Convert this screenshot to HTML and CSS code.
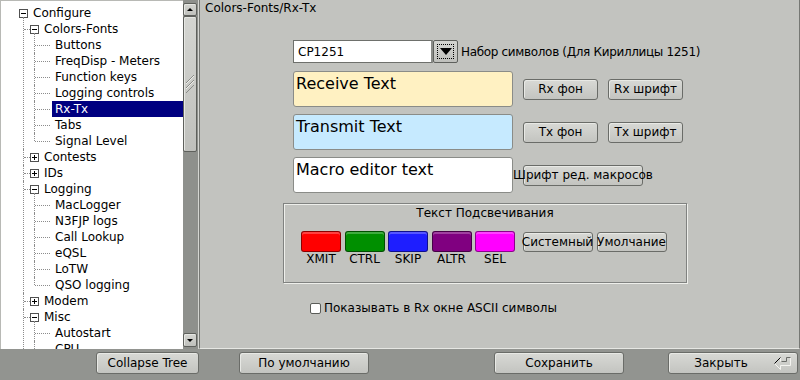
FILE: index.html
```html
<!DOCTYPE html>
<html lang="ru">
<head>
    <meta charset="UTF-8">
    <title>Configure - Colors-Fonts/Rx-Tx</title>
    <link rel="stylesheet" href="styles.css">
</head>
<body>
    <div class="main">
        <div class="browser">
            <div class="tree">
                <ul>
                    <li class="node"><div class="item"><span class="tog"></span><span class="label">Configure</span></div>
                        <ul>
                            <li class="node"><div class="item"><span class="tog"></span><span class="label">Colors-Fonts</span></div>
                                <ul>
                                    <li class="leaf"><div class="item"><span class="label">Buttons</span></div></li>
                                    <li class="leaf"><div class="item"><span class="label">FreqDisp - Meters</span></div></li>
                                    <li class="leaf"><div class="item"><span class="label">Function keys</span></div></li>
                                    <li class="leaf"><div class="item"><span class="label">Logging controls</span></div></li>
                                    <li class="leaf"><div class="item sel"><span class="label">Rx-Tx</span></div></li>
                                    <li class="leaf"><div class="item"><span class="label">Tabs</span></div></li>
                                    <li class="leaf"><div class="item"><span class="label">Signal Level</span></div></li>
                                </ul>
                            </li>
                            <li class="node"><div class="item"><span class="tog plus"></span><span class="label">Contests</span></div></li>
                            <li class="node"><div class="item"><span class="tog plus"></span><span class="label">IDs</span></div></li>
                            <li class="node"><div class="item"><span class="tog"></span><span class="label">Logging</span></div>
                                <ul>
                                    <li class="leaf"><div class="item"><span class="label">MacLogger</span></div></li>
                                    <li class="leaf"><div class="item"><span class="label">N3FJP logs</span></div></li>
                                    <li class="leaf"><div class="item"><span class="label">Call Lookup</span></div></li>
                                    <li class="leaf"><div class="item"><span class="label">eQSL</span></div></li>
                                    <li class="leaf"><div class="item"><span class="label">LoTW</span></div></li>
                                    <li class="leaf"><div class="item"><span class="label">QSO logging</span></div></li>
                                </ul>
                            </li>
                            <li class="node"><div class="item"><span class="tog plus"></span><span class="label">Modem</span></div></li>
                            <!-- list goes on below the fold, so the lines keep running -->
                            <li class="node more"><div class="item"><span class="tog"></span><span class="label">Misc</span></div>
                                <ul>
                                    <li class="leaf"><div class="item"><span class="label">Autostart</span></div></li>
                                    <li class="leaf more"><div class="item"><span class="label">CPU</span></div></li>
                                </ul>
                            </li>
                        </ul>
                    </li>
                </ul>
            </div>
            <div class="scroll">
                <div class="sb-btn up"></div>
                <div class="thumb">
                    <svg width="10" height="20" viewBox="0 0 10 20">
                        <path d="M1 9 L9 1 M1 14 L9 6 M1 19 L9 11" stroke="#8a8c88" stroke-width="1"/>
                        <path d="M1 10 L9 2 M1 15 L9 7" stroke="#eeeeea" stroke-width="1"/>
                    </svg>
                </div>
                <div class="track"></div>
                <div class="sb-btn down"></div>
            </div>
        </div>

        <section class="panel">
            <div class="panel-title">Colors-Fonts/Rx-Tx</div>
            <div class="content">
                <div class="combo-row">
                    <div class="combo">CP1251</div>
                    <div class="combo-btn"><span class="focus"><span class="tri"></span></span></div>
                    <span class="combo-label">Набор символов (Для Кириллицы 1251)</span>
                </div>

                <div class="text-row">
                    <div class="tbox rx">Receive Text</div>
                    <button class="btn small">Rx фон</button>
                    <button class="btn small">Rx шрифт</button>
                </div>
                <div class="text-row">
                    <div class="tbox tx">Transmit Text</div>
                    <button class="btn small">Tx фон</button>
                    <button class="btn small">Tx шрифт</button>
                </div>
                <div class="text-row">
                    <div class="tbox macro">Macro editor text</div>
                    <button class="btn wide">Шрифт ред. макросов</button>
                </div>

                <div class="group">
                    <div class="group-title">Текст Подсвечивания</div>
                    <div class="swatches">
                        <div class="swatch"><span class="chip xmit"></span>XMIT</div>
                        <div class="swatch"><span class="chip ctrl"></span>CTRL</div>
                        <div class="swatch"><span class="chip skip"></span>SKIP</div>
                        <div class="swatch"><span class="chip altr"></span>ALTR</div>
                        <div class="swatch"><span class="chip sel"></span>SEL</div>
                        <button class="btn sys">Системный</button>
                        <button class="btn def">Умолчание</button>
                    </div>
                </div>

                <label class="check-row"><span class="check"></span>Показывать в Rx окне ASCII символы</label>
            </div>
        </section>
    </div>

    <div class="bottom">
        <button class="btn collapse">Collapse Tree</button>
        <button class="btn action reset">По умолчанию</button>
        <button class="btn action save">Сохранить</button>
        <button class="btn action close">
            <span class="close-label">Закрыть</span>
            <svg class="ret" width="20" height="16" viewBox="0 0 20 16">
                <path d="M1.5 8.5 L7.5 14.5 M7.5 14.5 V10.5 H17.5 V2.5 M7.5 6.5 V2.5" stroke="#f4f4f0" fill="none"/>
                <path d="M1.5 8.5 L7.5 2.5" stroke="#000" fill="none"/>
                <path d="M8.5 6.5 H13.5 V2.5 H17.5" stroke="#6a6c68" fill="none"/>
            </svg>
        </button>
    </div>
</body>
</html>
```

FILE: styles.css
```css
* {
    box-sizing: border-box;
}

body {
    margin: 0;
    width: 800px;
    height: 380px;
    overflow: hidden;
    background-color: #929490;
    font-family: "DejaVu Sans", sans-serif;
    font-size: 12px;
    color: #000;
}

.main {
    display: flex;
    height: 349px;
}

/* tree browser */

.browser {
    display: flex;
    width: 199px;
    border-right: 1px solid #d4d5d1;
}

.tree {
    width: 183px;
    height: 349px;
    overflow: hidden;
    background-color: #fff;
    border-top: 1px solid #b8b9b5;
    border-left: 1px solid #b8b9b5;
    padding-top: 4px;
}

.tree ul {
    list-style: none;
    margin: 0;
    padding: 0 0 0 11px;
}

.tree > ul {
    padding-left: 18px;
}

.tree li {
    position: relative;
}

.tree ul ul > li::before {
    content: "";
    position: absolute;
    left: -7px;
    top: 0;
    bottom: 0;
    border-left: 1px dotted #8c8c8c;
}

.tree ul ul > li:first-child::before {
    top: -4px;
}

.tree ul ul > li:last-child::before {
    bottom: auto;
    height: 8px;
}

.tree ul ul > li.more:last-child::before {
    bottom: -40px;
    height: auto;
}

.tree ul ul > li::after {
    content: "";
    position: absolute;
    left: -6px;
    top: 8px;
    width: 6px;
    border-top: 1px dotted #8c8c8c;
}

.tree ul ul > li.leaf::after {
    width: 15px;
}

.item {
    display: flex;
    align-items: center;
    height: 16px;
    gap: 5px;
    white-space: nowrap;
}

.leaf .item {
    padding-left: 14px;
}

.label {
    flex: 1;
    height: 16px;
    line-height: 16px;
    margin-left: -3px;
    padding-left: 3px;
}

.item.sel .label {
    background-color: #000080;
    color: #fff;
}

.tog {
    position: relative;
    flex: none;
    width: 9px;
    height: 9px;
    border: 1px solid #505050;
    background-color: #fff;
}

.tog::before {
    content: "";
    position: absolute;
    left: 1px;
    top: 3px;
    width: 5px;
    height: 1px;
    background-color: #000;
}

.tog.plus::after {
    content: "";
    position: absolute;
    left: 3px;
    top: 1px;
    width: 1px;
    height: 5px;
    background-color: #000;
}

.scroll {
    display: flex;
    flex-direction: column;
    width: 15px;
    padding: 3px 1px 2px 0;
    background-color: #8e908c;
}

.sb-btn, .thumb {
    border: 1px solid #5e605c;
    border-radius: 2px;
    background: linear-gradient(#d4d5d1, #bfc0bc);
    box-shadow: inset 1px 1px 0 #e6e7e3;
}

.sb-btn {
    position: relative;
    height: 13px;
}

.sb-btn.down {
    height: 14px;
}

.sb-btn::after {
    content: "";
    position: absolute;
    left: 3px;
    top: 4px;
    border-left: 3px solid transparent;
    border-right: 3px solid transparent;
    border-bottom: 3px solid #000;
}

.sb-btn.down::after {
    top: 5px;
    border-bottom: none;
    border-top: 3px solid #000;
}

.thumb {
    display: flex;
    align-items: center;
    justify-content: center;
    height: 136px;
}

.track {
    flex: 1;
}

/* right panel */

.panel {
    flex: 1;
    background-color: #c2c3bf;
    border-left: 1px solid #767874;
    border-right: 1px solid #767874;
    border-bottom: 1px solid #e6e7e3;
}

.panel-title {
    height: 16px;
    padding: 1px 0 0 5px;
    line-height: 14px;
}

.content {
    display: flex;
    flex-direction: column;
    align-items: flex-start;
    padding: 24px 0 0 93px;
}

.combo-row {
    display: flex;
    align-items: center;
    height: 23px;
}

.combo {
    display: flex;
    align-items: center;
    width: 140px;
    height: 23px;
    padding-left: 4px;
    background-color: #fff;
    border: 1px solid #6e706c;
    border-right: 2px solid #8a8c88;
}

.combo-btn {
    display: flex;
    width: 25px;
    height: 23px;
    padding: 3px;
    border: 1px solid #5e605c;
    border-radius: 2px;
    background: linear-gradient(#d4d5d1, #bfc0bc);
}

.focus {
    display: flex;
    align-items: center;
    justify-content: center;
    flex: 1;
    border: 1px dotted #000;
}

.tri {
    border-left: 6px solid transparent;
    border-right: 6px solid transparent;
    border-top: 7px solid #000;
}

.combo-label {
    margin-left: 3px;
    letter-spacing: -0.33px;
    white-space: nowrap;
}

.text-row {
    display: flex;
    align-items: center;
    gap: 10px;
    margin-top: 7px;
}

.combo-row + .text-row {
    margin-top: 8px;
}

.tbox {
    width: 220px;
    height: 36px;
    padding: 2px 0 0 2px;
    border: 1px solid #8a8c88;
    border-radius: 3px;
    font-size: 16px;
    background-color: #fff;
}

.tbox.rx {
    background-color: #fff1c2;
}

.tbox.tx {
    background-color: #c6eaff;
}

.btn {
    display: flex;
    align-items: center;
    justify-content: center;
    height: 21px;
    padding: 0;
    border: 1px solid #6a6c68;
    border-radius: 3px;
    background: linear-gradient(#d8d9d5, #c3c4c0);
    box-shadow: inset 1px 1px 0 #e8e9e5;
    font: 12px "DejaVu Sans", sans-serif;
    color: #000;
    white-space: nowrap;
}

.btn.small {
    width: 75px;
}

.btn.wide {
    width: 120px;
}

.group {
    width: 404px;
    height: 80px;
    margin: 10px 0 0 -10px;
    border: 1px solid #808280;
    box-shadow: 1px 1px 0 #eeefeb, inset 1px 1px 0 #eeefeb;
}

.group-title {
    padding-top: 1px;
    line-height: 16px;
    text-align: center;
}

.swatches {
    display: flex;
    align-items: flex-start;
    margin-top: 10px;
    padding-left: 17px;
}

.swatch {
    display: flex;
    flex-direction: column;
    align-items: center;
    width: 40px;
    margin-right: 3.5px;
    line-height: 14px;
}

.chip {
    width: 40px;
    height: 21px;
    border: 1px solid rgba(0, 0, 0, 0.45);
    border-radius: 3px;
    box-shadow: inset 0 2px 0 rgba(255, 255, 255, 0.25);
}

.chip.xmit { background-color: #ff0000; }
.chip.ctrl { background-color: #008f00; }
.chip.skip { background-color: #1e1eff; }
.chip.altr { background-color: #800080; }
.chip.sel  { background-color: #ff00ff; }

.btn.sys {
    width: 70px;
    height: 20px;
    margin: 1px 0 0 4px;
}

.btn.def {
    width: 70px;
    height: 20px;
    margin: 1px 0 0 4px;
}

.check-row {
    display: flex;
    align-items: center;
    gap: 3px;
    margin: 18px 0 0 17px;
    line-height: 14px;
}

.check {
    width: 11px;
    height: 11px;
    background-color: #fff;
    border: 1px solid #5a5c58;
    border-radius: 2px;
}

/* bottom buttons */

.bottom {
    display: flex;
    padding: 3px 0 0 96px;
}

.bottom .btn {
    height: 22px;
}

.btn.collapse {
    width: 103px;
}

.btn.action {
    width: 130px;
}

.btn.reset {
    margin-left: 40px;
}

.btn.save {
    margin-left: 125px;
}

.btn.close {
    margin-left: 44px;
    justify-content: flex-start;
}

.close-label {
    width: 104px;
    text-align: center;
}

.ret {
    flex: none;
}
```
